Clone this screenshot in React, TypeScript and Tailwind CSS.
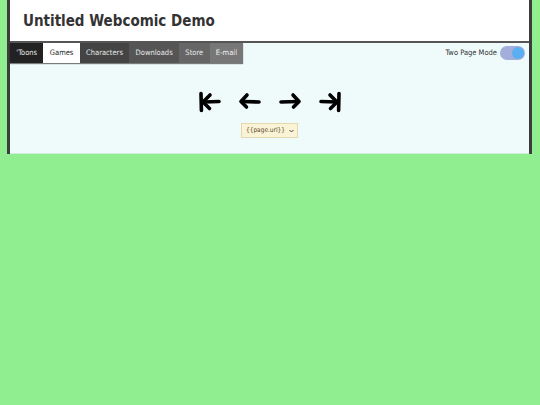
import React, { useState } from 'react';

const tabs = [
  { label: "'Toons", cls: 'bg-[#222222] text-[#e8e8e8]' },
  { label: 'Games', cls: 'bg-white text-[#222222]' },
  { label: 'Characters', cls: 'bg-[#444444] text-[#e8e8e8]' },
  { label: 'Downloads', cls: 'bg-[#555555] text-[#e8e8e8]' },
  { label: 'Store', cls: 'bg-[#666666] text-[#e8e8e8]' },
  { label: 'E-mail', cls: 'bg-[#777777] text-[#f0f0f0]' },
];

// hand-drawn looking nav arrows
const Arrow = ({ kind }: { kind: 'first' | 'prev' | 'next' | 'last' }) => {
  const flip = kind === 'next' || kind === 'last';
  const bar = kind === 'first' || kind === 'last';
  return (
    <svg width="24" height="22" viewBox="0 0 24 22" className={flip ? '-scale-x-100' : ''}>
      <g fill="none" stroke="#000" strokeWidth="3.6" strokeLinecap="round" strokeLinejoin="round">
        {bar && <path d="M3 2.5 L3.4 19.5" />}
        <path d={bar ? 'M12 4 L5 11 L11.5 17.5' : 'M9 4 L3 10.5 L8.5 16'} />
        <path d={bar ? 'M5.5 11 L21 10.5' : 'M3.5 10.5 L21 11'} />
      </g>
    </svg>
  );
};

export default function App() {
  const [twoPage, setTwoPage] = useState(true);
  return (
    <div className="min-h-[405px] bg-[#90ee90] font-['DejaVu_Sans_Condensed','DejaVu_Sans',sans-serif]">
      <div className="ml-[7px] mr-[8px] border-x-[3px] border-[#3c3c3c]">
        <header className="bg-white h-[43px] flex items-center pl-[13px] pt-[2px] border-b-2 border-[#555555]">
          <h1 className="text-[15px] font-bold text-[#333333]">Untitled Webcomic Demo</h1>
        </header>
        <div className="bg-[#effbfb] border-b border-[#cfeedd]">
          <div className="flex items-start justify-between">
            <nav className="flex h-[20px] shadow-[0_1px_1px_rgba(0,0,0,0.5)]">
              {tabs.map((t) => (
                <span key={t.label} className={`px-[6.35px] flex items-center text-[7.5px] ${t.cls}`}>
                  {t.label}
                </span>
              ))}
            </nav>
            <div className="flex items-center gap-[3px] pt-[3px] pr-[4px]">
              <span className="text-[7.5px] text-[#333333]">Two Page Mode</span>
              <button
                onClick={() => setTwoPage(!twoPage)}
                className={`w-[25px] h-[14px] rounded-full bg-[#a3aedb] flex items-center p-[1px] ${twoPage ? 'justify-end' : 'justify-start'}`}
              >
                <span className="w-[12px] h-[12px] rounded-full bg-[#5aaef2]" />
              </button>
            </div>
          </div>
          <div className="flex flex-col items-center pt-[28px] pb-[15px]">
            <div className="flex gap-[16px]">
              <Arrow kind="first" />
              <Arrow kind="prev" />
              <Arrow kind="next" />
              <Arrow kind="last" />
            </div>
            <div className="mt-[10px] h-[15px] pl-[4px] pr-[3px] flex items-center gap-[4px] bg-[#fbf3d5] border border-[#e2d9b0] text-[6.5px] text-[#5a4a2a]">
              <span>{'{{page.url}}'}</span>
              <svg width="5" height="4" viewBox="0 0 5 4"><path d="M0.5 1 L2.5 3 L4.5 1" fill="none" stroke="#444" strokeWidth="1" /></svg>
            </div>
          </div>
        </div>
      </div>
    </div>
  );
}
